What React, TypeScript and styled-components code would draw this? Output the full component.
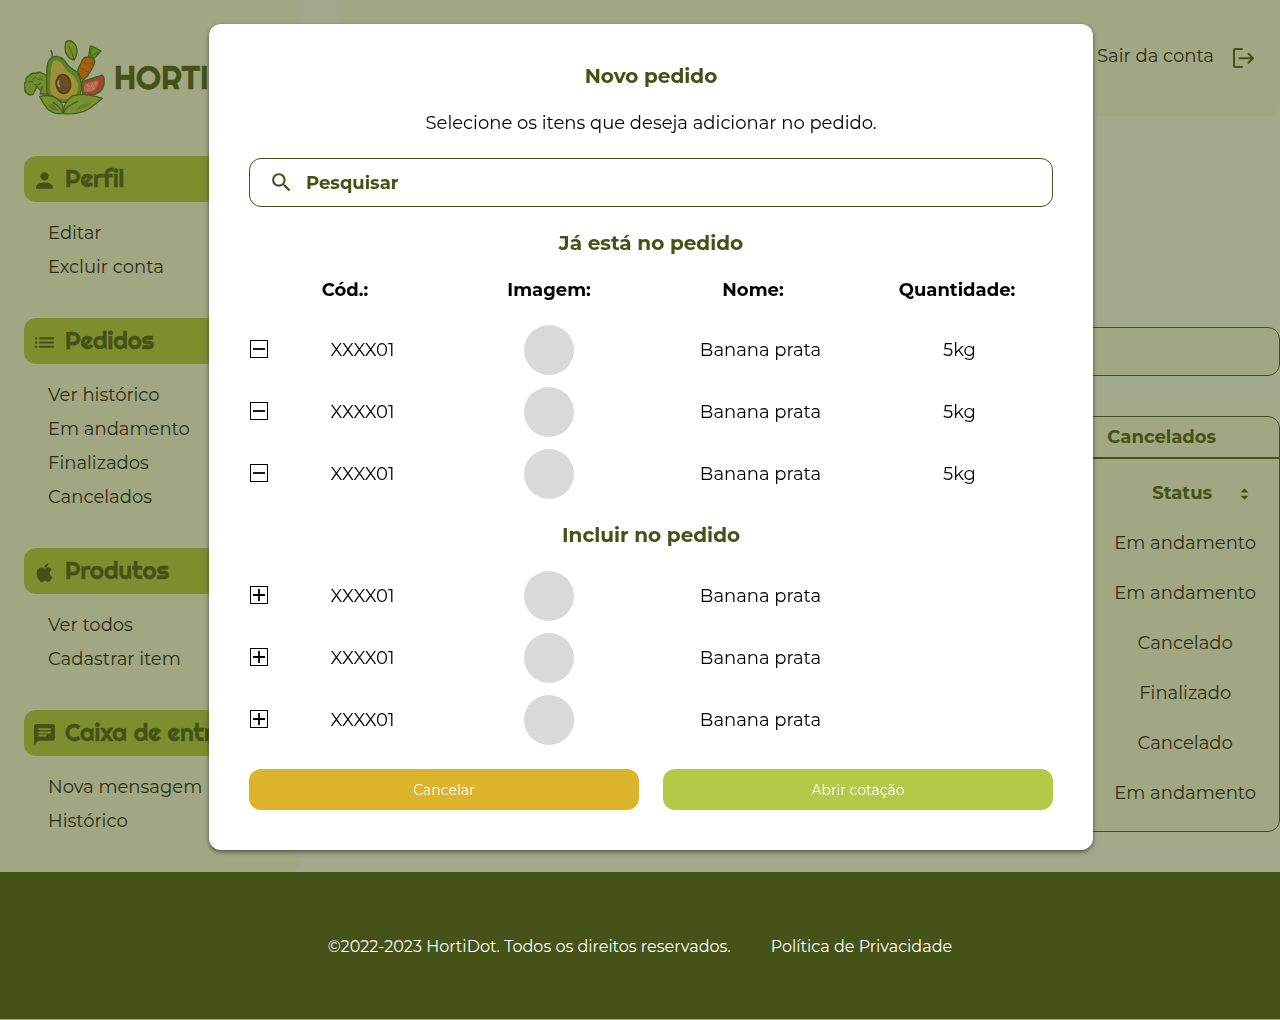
import React from 'react';
import styled, { createGlobalStyle } from 'styled-components';
import { MdPerson, MdList, MdChat, MdSearch } from 'react-icons/md';

const c = {
  page: '#a2a88c',
  panel: '#a1a782',
  dark: '#445218',
  footer: '#455318',
  bar: '#7d8e2f',
  ink: '#2b3015',
  yellow: '#deb32c',
  green: '#b4c948',
};

const GlobalStyle = createGlobalStyle`
  * { box-sizing: border-box; }
  body {
    margin: 0;
    background: ${c.page};
    font-family: Montserrat, Inter, 'Open Sans', sans-serif;
    font-size: 18px;
    color: ${c.ink};
    overflow: hidden;
  }
  ul { list-style: none; }
`;

const Shell = styled.div`
  display: grid;
  grid-template-columns: 300px 1fr;
  column-gap: 40px;
  height: 872px;
`;

const Sidebar = styled.aside`
  background: ${c.panel};
  border-radius: 0 0 12px 0;
  padding: 40px 24px 0;
`;

const Brand = styled.div`
  display: flex;
  align-items: center;
  gap: 8px;
  height: 76px;
  margin-bottom: 39.5px;
  svg { flex: none; }
`;

const BrandName = styled.span`
  margin-top: -2px;
  font: 400 32px Righteous, Lato, sans-serif;
  color: ${c.dark};
  -webkit-text-stroke: 0.5px ${c.dark};
`;

const Section = styled.section`
  margin-bottom: 34px;
`;

const SectionBar = styled.h2`
  display: flex;
  align-items: center;
  height: 46px;
  margin: 0;
  padding: 0 0 0 8px;
  gap: 8px;
  overflow: hidden;
  border-radius: 12px;
  background: ${c.bar};
  color: ${c.dark};
  font: 400 24px Righteous, Lato, sans-serif;
  -webkit-text-stroke: 0.4px ${c.dark};
  white-space: nowrap;
  svg { flex: none; margin-top: 3px; }
  span { margin-top: -2px; }
`;

const Links = styled.ul`
  margin: 0;
  padding: 14px 0 0 24px;
`;

const LinkItem = styled.li`
  height: 34px;
  line-height: 34px;
  white-space: nowrap;
`;

const Main = styled.main`
  display: flex;
  flex-direction: column;
`;

const TopBar = styled.header`
  display: flex;
  justify-content: flex-end;
  align-items: center;
  gap: 17px;
  height: 116px;
  padding: 0 25px 4px 0;
  background: ${c.panel};
  border-radius: 0 0 12px 12px;
  svg { margin-top: 3px; }
`;

const PageSearch = styled.div`
  height: 49px;
  margin-top: 211px;
  border: 1px solid ${c.dark};
  border-radius: 12px;
  background: ${c.panel};
`;

const OrdersTable = styled.section`
  height: 416px;
  margin-top: 40px;
  border: 1px solid ${c.dark};
  border-radius: 12px;
  background: ${c.panel};
`;

const Tabs = styled.div`
  display: grid;
  grid-template-columns: repeat(4, 1fr);
  height: 42px;
  border-bottom: 2px solid ${c.dark};
`;

const Tab = styled.div`
  grid-column: 4;
  display: flex;
  align-items: center;
  justify-content: center;
  color: ${c.dark};
  font-weight: 700;
`;

const TableGrid = styled.div`
  display: grid;
  grid-template-columns: repeat(5, 1fr);
  grid-auto-rows: 50px;
  padding-top: 9px;
`;

const StatusCell = styled.div<{ $head?: boolean }>`
  grid-column: 5;
  display: flex;
  align-items: center;
  justify-content: center;
  gap: 28px;
  ${(p) => p.$head && `color: ${c.dark}; font-weight: 700; padding-left: 31px;`}
`;

const Footer = styled.footer`
  display: flex;
  align-items: center;
  justify-content: center;
  gap: 40px;
  height: 147px;
  padding-top: 1px;
  background: ${c.footer};
  color: #fff;
  font-size: 16px;
`;

const Modal = styled.div`
  position: fixed;
  top: 24px;
  left: 209px;
  width: 884px;
  height: 826px;
  padding: 40px;
  border-radius: 12px;
  background: #fff;
  box-shadow: 0 2px 4px rgba(0, 0, 0, 0.5);
  color: #000;
`;

const Title = styled.h2<{ $h: number }>`
  display: flex;
  align-items: center;
  justify-content: center;
  height: ${(p) => p.$h}px;
  margin: 0;
  font-size: 20px;
  font-weight: 700;
  color: ${c.dark};
`;

const Hint = styled.p`
  height: 22px;
  margin: 24px 0;
  line-height: 22px;
  text-align: center;
`;

const SearchField = styled.div`
  display: flex;
  align-items: center;
  gap: 12px;
  height: 49px;
  padding-left: 19px;
  border: 1px solid ${c.dark};
  border-radius: 12px;
  color: ${c.dark};
  font-weight: 700;
  svg { margin-top: -1px; }
`;

const Headings = styled.div`
  display: grid;
  grid-template-columns: repeat(4, 1fr);
  align-items: center;
  height: 22px;
  margin: 0 -6px 24px;
  font-weight: 700;
  text-align: center;
`;

const ItemList = styled.div`
  display: flex;
  flex-direction: column;
  gap: 12px;
`;

const ItemRow = styled.div`
  display: grid;
  grid-template-columns: 27px 173px 200px 223px 175px;
  align-items: center;
  height: 50px;
  text-align: center;
`;

const Avatar = styled.div`
  width: 50px;
  height: 50px;
  margin: 0 auto;
  border-radius: 50%;
  background: #d9d9d9;
`;

const Toggle = styled.button`
  display: block;
  width: 18px;
  height: 18px;
  padding: 0;
  margin: -2px 0 0 1px;
  border: 0;
  background: none;
  svg { display: block; }
`;

const Actions = styled.div`
  display: grid;
  grid-template-columns: 1fr 1fr;
  gap: 24px;
  margin-top: 24px;
`;

const Action = styled.button<{ $bg: string }>`
  height: 41px;
  border: 0;
  border-radius: 12px;
  background: ${(p) => p.$bg};
  color: #fff;
  font: 400 14px Montserrat, Inter, sans-serif;
`;

const Logo = () => (
  <svg width="82" height="76" viewBox="24 24 246 228" strokeLinejoin="round" strokeLinecap="round">
    <g stroke="#46611b" strokeWidth="4">
      <path d="M62 163 Q60 172 51 187 Q39 192 34 184 Q24 180 27 167 Q20 155 31 149 Q27 134 40 132 Q47 120 60 124 Q71 117 80 125 Q91 126 93 139 L98 186 H72 Q78 178 70 172Z" fill="#718d2f" />
      <path d="M38 150 Q44 145 51 149 M50 141 Q56 132 64 139 M67 142 Q75 137 80 145 M55 158 Q64 164 74 154 M79 163 L76 174" fill="none" strokeWidth="3" />
      <path d="M196 150 L253 131 Q262 126 264 139 Q269 180 230 189 H200Z" fill="#9c4a2f" />
      <path d="M206 155 L247 144 Q250 171 225 179 H203Z" fill="#b0694f" stroke="none" />
      <path d="M212 159 L222 163 M214 176 L220 169 M229 155 L225 164 M240 153 L230 166 M236 169 L228 171" fill="none" stroke="#c08a6c" strokeWidth="3" />
      <path d="M218 74 L223 42 L235 46 L255 57 L234 79Z" fill="#5f8d24" />
      <path d="M225 48 L224 74 L248 58" fill="none" strokeWidth="3" />
      <path d="M199 84 Q205 73 219 75 Q236 78 236 90 Q233 105 213 133 L200 145 L184 117Z" fill="#a55f13" />
      <path d="M204 91 L211 95 M231 97 L222 94 M194 108 L202 112 M217 121 L209 117" fill="none" stroke="#7d4b12" strokeWidth="3" />
      <path d="M150 29 Q167 20 180 42 Q188 65 174 84 Q157 82 149 61 Q145 44 150 29Z" fill="#75902c" />
      <path d="M158 42 Q168 61 174 82" fill="none" strokeWidth="3" />
      <path d="M109 74 Q110 64 105 56" fill="none" strokeWidth="5" />
      <path d="M93 120 Q91 74 121 73 Q142 74 154 98 Q164 109 181 119 Q198 137 196 172 Q194 204 145 211 Q98 204 92 176 Q91 145 93 120Z" fill="#56832b" />
    </g>
    <path d="M104 130 Q105 83 121 85 Q134 85 145 107 Q154 119 171 130 Q188 147 186 172 Q181 201 145 202 Q106 199 102 174Z" fill="#a08f35" />
    <ellipse cx="142" cy="156" rx="22" ry="29" fill="#674d21" stroke="#4a3d17" strokeWidth="4" transform="rotate(-8 142 156)" />
    <path d="M128 146 Q124 157 130 163" fill="none" stroke="#9c8f74" strokeWidth="5" />
    <g stroke="#46611b" strokeWidth="4" fill="#79922f">
      <path d="M141 244 Q112 248 94 230 Q82 216 71 194 Q119 180 141 222Z" />
      <path d="M141 245 Q143 209 169 192 Q204 181 259 199 Q240 217 218 231 Q188 249 141 245Z" />
      <path d="M142 243 Q151 221 184 209 M141 242 Q130 222 112 211" fill="none" />
    </g>
    <path d="M176 236 Q213 227 230 209 Q211 217 195 218Z M95 220 Q107 237 131 238 Q116 226 112 214Z" fill="#5d7f2c" />
  </svg>
);

const AppleIcon = () => (
  <svg width="25" height="25" viewBox="0 0 24 24" fill="currentColor">
    <path d="M17.05 20.28c-.98.95-2.05.8-3.08.35-1.09-.46-2.09-.48-3.24 0-1.44.62-2.2.44-3.06-.35C2.79 15.25 3.51 7.59 9.05 7.31c1.35.07 2.29.74 3.08.8 1.18-.24 2.31-.93 3.57-.84 1.51.12 2.65.72 3.4 1.8-3.12 1.87-2.38 5.98.48 7.13-.57 1.5-1.31 2.99-2.54 4.09zM12.03 7.25c-.15-2.23 1.66-4.07 3.74-4.25.29 2.58-2.34 4.5-3.74 4.25z" />
  </svg>
);

const ExitIcon = () => (
  <svg width="24" height="24" viewBox="0 0 24 24" fill="none" stroke={c.dark} strokeWidth="2" strokeLinecap="round" strokeLinejoin="round">
    <path d="M11 3.1 H4 Q3 3.1 3 4.1 V20 Q3 21 4 21 H11 M8.5 12.2 H21.5 M17.5 7.7 L22 12.2 L17.5 16.7" />
  </svg>
);

const SortArrows = styled.svg`
  margin-top: 2px;
`;

const SortIcon = () => (
  <SortArrows width="9" height="12" viewBox="0 0 9 12" fill={c.dark}>
    <path d="M0.5 4.5 L4.5 0.3 L8.5 4.5Z M0.5 7.7 H8.5 L4.5 11.8Z" />
  </SortArrows>
);

const BoxIcon = ({ plus }: { plus?: boolean }) => (
  <svg width="18" height="18" viewBox="0 0 18 18" fill="none" stroke="#000">
    <rect x="0.5" y="0.5" width="17" height="17" />
    <path d={plus ? 'M3 9 H15 M9 3 V15' : 'M3 9 H15'} strokeWidth="1.8" />
  </svg>
);

const sections = [
  { title: 'Perfil', icon: <MdPerson size={25} strokeWidth={0} />, links: ['Editar', 'Excluir conta'] },
  {
    title: 'Pedidos',
    icon: <MdList size={25} />,
    links: ['Ver histórico', 'Em andamento', 'Finalizados', 'Cancelados'],
  },
  { title: 'Produtos', icon: <AppleIcon />, links: ['Ver todos', 'Cadastrar item'] },
  { title: 'Caixa de entrada', icon: <MdChat size={25} />, links: ['Nova mensagem', 'Histórico'] },
];

const statuses = ['Em andamento', 'Em andamento', 'Cancelado', 'Finalizado', 'Cancelado', 'Em andamento'];

const headings = ['Cód.:', 'Imagem:', 'Nome:', 'Quantidade:'];

function Item({ included }: { included?: boolean }) {
  return (
    <ItemRow>
      <Toggle><BoxIcon plus={!included} /></Toggle>
      <span>XXXX01</span>
      <Avatar />
      <span>Banana prata</span>
      {included && <span>5kg</span>}
    </ItemRow>
  );
}

export default function App() {
  return (
    <>
      <GlobalStyle />
      <Shell>
        <Sidebar>
          <Brand>
            <Logo />
            <BrandName>HORTIDOT</BrandName>
          </Brand>
          {sections.map((s) => (
            <Section key={s.title}>
              <SectionBar>
                {s.icon}
                <span>{s.title}</span>
              </SectionBar>
              <Links>
                {s.links.map((text) => <LinkItem key={text}>{text}</LinkItem>)}
              </Links>
            </Section>
          ))}
        </Sidebar>
        <Main>
          <TopBar>
            <span>Sair da conta</span>
            <ExitIcon />
          </TopBar>
          <PageSearch />
          <OrdersTable>
            <Tabs><Tab>Cancelados</Tab></Tabs>
            <TableGrid>
              <StatusCell $head><span>Status</span><SortIcon /></StatusCell>
              {statuses.map((text, i) => <StatusCell key={i}>{text}</StatusCell>)}
            </TableGrid>
          </OrdersTable>
        </Main>
      </Shell>
      <Footer>
        <span>©2022-2023 HortiDot. Todos os direitos reservados.</span>
        <span>Política de Privacidade</span>
      </Footer>
      <Modal role="dialog">
        <Title $h={24}>Novo pedido</Title>
        <Hint>Selecione os itens que deseja adicionar no pedido.</Hint>
        <SearchField>
          <MdSearch size={25} />
          <span>Pesquisar</span>
        </SearchField>
        <Title $h={72}>Já está no pedido</Title>
        <Headings>
          {headings.map((text) => <span key={text}>{text}</span>)}
        </Headings>
        <ItemList><Item included /><Item included /><Item included /></ItemList>
        <Title $h={72}>Incluir no pedido</Title>
        <ItemList><Item /><Item /><Item /></ItemList>
        <Actions>
          <Action $bg={c.yellow}>Cancelar</Action>
          <Action $bg={c.green}>Abrir cotação</Action>
        </Actions>
      </Modal>
    </>
  );
}
